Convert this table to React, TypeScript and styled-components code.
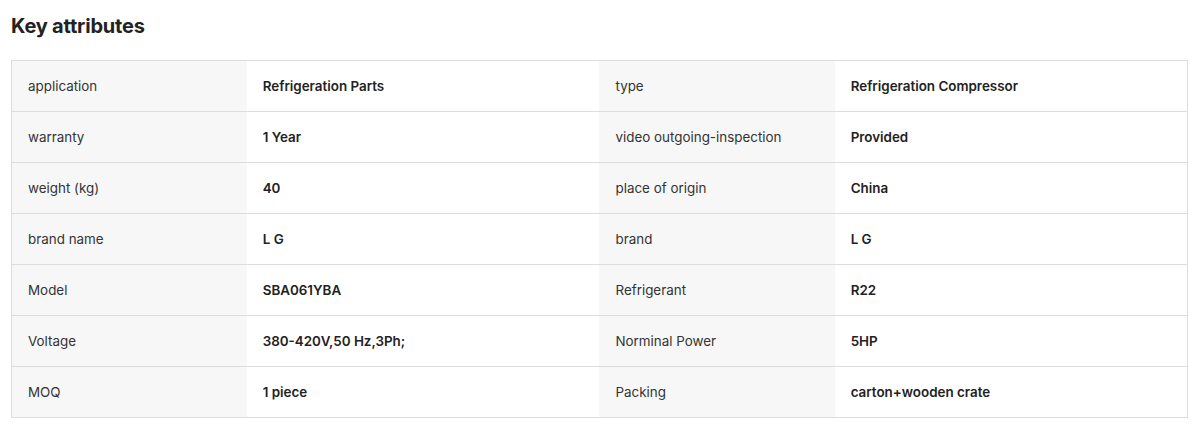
import styled, { createGlobalStyle } from 'styled-components';

const GlobalStyle = createGlobalStyle`
  body {
    margin: 0;
    background: #fff;
    font-family: Inter, "Noto Sans", "Liberation Sans", sans-serif;
    color: #222;
  }
`;

const attributes: [string, string, string, string][] = [
  ['application', 'Refrigeration Parts', 'type', 'Refrigeration Compressor'],
  ['warranty', '1 Year', 'video outgoing-inspection', 'Provided'],
  ['weight (kg)', '40', 'place of origin', 'China'],
  ['brand name', 'L G', 'brand', 'L G'],
  ['Model', 'SBA061YBA', 'Refrigerant', 'R22'],
  ['Voltage', '380-420V,50 Hz,3Ph;', 'Norminal Power', '5HP'],
  ['MOQ', '1 piece', 'Packing', 'carton+wooden crate'],
];

export default function App() {
  return (
    <>
      <GlobalStyle />
      <Section>
        <Title>Key attributes</Title>
        <Table>
          <colgroup>
            <col style={{ width: '20%' }} />
            <col style={{ width: '30%' }} />
            <col style={{ width: '20%' }} />
            <col style={{ width: '30%' }} />
          </colgroup>
          <tbody>
            {attributes.map(([k1, v1, k2, v2]) => (
              <Row key={k1}>
                <Label>{k1}</Label>
                <Value>{v1}</Value>
                <Label>{k2}</Label>
                <Value>{v2}</Value>
              </Row>
            ))}
          </tbody>
        </Table>
      </Section>
    </>
  );
}

const Section = styled.section`
  padding: 12px 12px 0 11px;
`;

const Title = styled.h2`
  margin: 0 0 20px;
  font-size: 20px;
  line-height: 28px;
  font-weight: 700;
  color: #222;
  letter-spacing: -0.2px;
`;

const Table = styled.table`
  width: 1177px;
  table-layout: fixed;
  border-collapse: collapse;
  border: 1px solid #dddddd;
  font-size: 13.4px;
`;

const Row = styled.tr`
  height: 51px;
  border-bottom: 1px solid #dddddd;
`;

const Label = styled.td`
  padding: 0 16px 0;
  background: #f7f7f7;
  color: #333;
  font-weight: 400;
  vertical-align: middle;
`;

const Value = styled.td`
  padding: 0 16px 0;
  background: #fff;
  color: #222;
  font-weight: 600;
  vertical-align: middle;
`;
